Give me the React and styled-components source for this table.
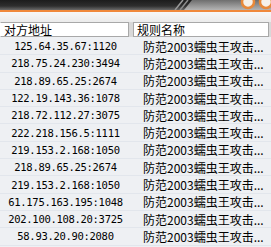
import React from 'react';
import styled, { createGlobalStyle } from 'styled-components';

const GlobalStyle = createGlobalStyle`
  html, body {
    margin: 0;
    padding: 0;
    background: #eef0f3;
  }
`;

const Frame = styled.div`
  width: 271px;
  height: 247px;
  overflow: hidden;
  display: flex;
  flex-direction: column;
  background: #eef0f3;
`;

const TitleBar = styled.div`
  height: 10px;
  flex: none;
  position: relative;
  background: linear-gradient(#1c1c1c 0%, #2e2e2e 60%, #6a6a6a 100%);
  border-bottom: 2px solid #f0883a;
`;

const Deco = styled.svg`
  position: absolute;
  top: 0;
  left: 0;
  display: block;
`;

const HeaderZone = styled.div`
  height: 10px;
  flex: none;
  background: linear-gradient(#f7f7f7, #ebebeb);
`;

const HeaderRow = styled.div`
  display: flex;
  height: 15px;
  flex: none;
  background: #d8d8d8;
  gap: 4px;
  padding-right: 2px;
`;

const HeaderCell = styled.div`
  width: ${p => p.w}px;
  box-sizing: border-box;
  background: #ffffff;
  border: 1px solid #a8a8a8;
  border-left-color: ${p => (p.first ? '#ffffff' : '#a8a8a8')};
  font-family: "Noto Sans CJK SC", sans-serif;
  font-size: 12px;
  line-height: 13px;
  color: #000;
  padding-left: 3px;
  white-space: nowrap;
  overflow: hidden;
`;

const Body = styled.div`
  padding-top: 1px;
  display: flex;
  flex-direction: column;
`;

const Row = styled.div`
  display: flex;
  height: 17.3px;
  flex: none;
  box-sizing: border-box;
  border-bottom: 1px solid #e2e6ec;
  align-items: center;
`;

const AddrCell = styled.div`
  width: 131px;
  text-align: center;
  font-family: "DejaVu Sans Mono", monospace;
  font-size: 10.5px;
  letter-spacing: -0.3px;
  color: #000;
  white-space: nowrap;
`;

const RuleCell = styled.div`
  flex: 1;
  padding-left: 12px;
  font-family: "Noto Sans CJK SC", sans-serif;
  font-size: 12px;
  color: #000;
  white-space: nowrap;
  overflow: hidden;
`;

const rows = [
  '125.64.35.67:1120',
  '218.75.24.230:3494',
  '218.89.65.25:2674',
  '122.19.143.36:1078',
  '218.72.112.27:3075',
  '222.218.156.5:1111',
  '219.153.2.168:1050',
  '218.89.65.25:2674',
  '219.153.2.168:1050',
  '61.175.163.195:1048',
  '202.100.108.20:3725',
  '58.93.20.90:2080',
  '218.75.24.230:3494',
];

const TopDecoration = () => (
  <Deco width="271" height="10" viewBox="0 0 271 10">
    <defs>
      <linearGradient id="lite" x1="0" y1="0" x2="0" y2="1">
        <stop offset="0" stopColor="#6e6e6e" />
        <stop offset="1" stopColor="#b4b4b4" />
      </linearGradient>
    </defs>
    <polygon points="192,0 271,0 271,10 184,10" fill="url(#lite)" />
    <line x1="175" y1="10" x2="183" y2="0" stroke="#9a9a9a" strokeWidth="1.5" />
    <line x1="180" y1="10" x2="188" y2="0" stroke="#8c8c8c" strokeWidth="1.5" />
    <circle cx="248" cy="2" r="6" fill="#f6f1ea" stroke="#e8893a" strokeWidth="2.5" />
    <circle cx="266" cy="2" r="6" fill="#f6f1ea" stroke="#e8893a" strokeWidth="2.5" />
  </Deco>
);

export default function App() {
  return (
    <Frame>
      <GlobalStyle />
      <TitleBar>
        <TopDecoration />
      </TitleBar>
      <HeaderZone />
      <HeaderRow>
        <HeaderCell w={129} first>对方地址</HeaderCell>
        <HeaderCell w={136}>规则名称</HeaderCell>
      </HeaderRow>
      <Body>
        {rows.map((addr, i) => (
          <Row key={i}>
            <AddrCell>{addr}</AddrCell>
            <RuleCell>防范2003蠕虫王攻击...</RuleCell>
          </Row>
        ))}
      </Body>
    </Frame>
  );
}
